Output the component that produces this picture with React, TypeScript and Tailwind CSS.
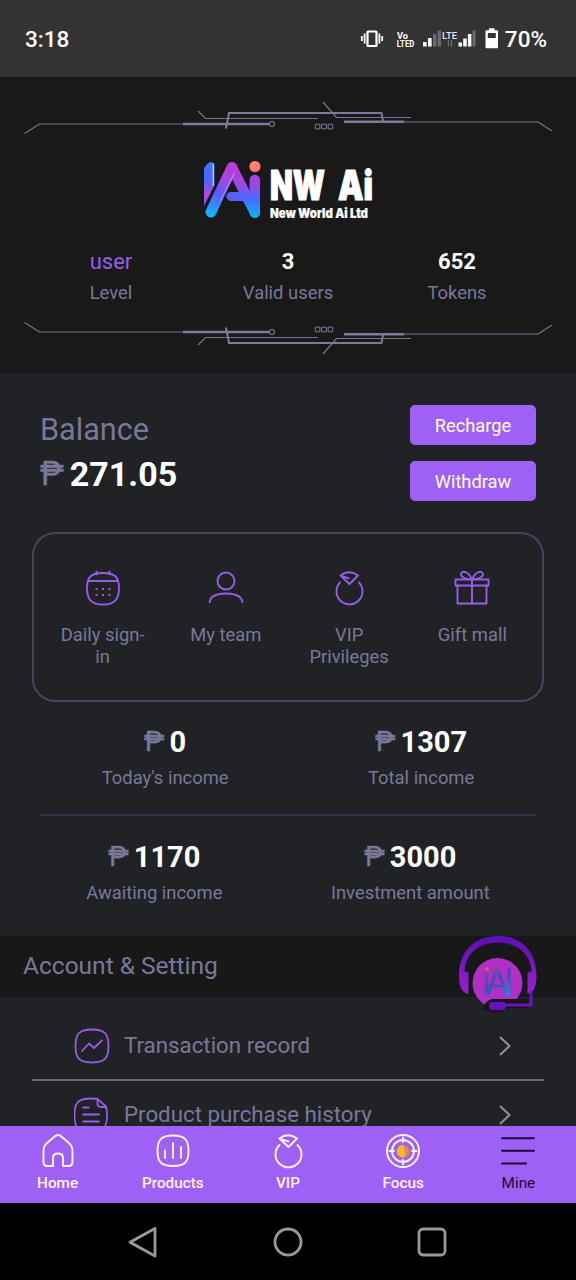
import type { ReactNode } from "react";

/* ─── Status bar ─── */

function StatusBar() {
  return (
    <div className="h-[77px] shrink-0 bg-[#333333] flex items-center justify-between pl-[25px] pr-[29px] text-white text-[22.5px] font-medium">
      <span className="pt-[3px]">3:18</span>
      <div className="flex items-center">
        <svg width="138" height="30" viewBox="360 24 138 30">
          {/* Vibrate */}
          <g fill="none" stroke="#fff" strokeWidth="1.8">
            <rect x="367.5" y="31.5" width="9" height="14.5" rx="0.5" strokeWidth="2.2" />
            <path d="M364.6 33.5v10M361.8 36v5M379.4 33.5v10M382.2 36v5" />
          </g>
          {/* VoLTE */}
          <text x="397" y="38.5" fill="#fff" fontSize="9.5" fontWeight="700" textLength="11" lengthAdjust="spacingAndGlyphs">
            Vo
          </text>
          <text x="396.8" y="46.5" fill="#fff" fontSize="9.5" fontWeight="700" textLength="17.5" lengthAdjust="spacingAndGlyphs">
            LTED
          </text>
          {/* Signal */}
          <path fill="#fff" d="M423 42h3.6v4.5H423zM428 38h3.6v8.5H428z" />
          <path fill="#6b6b6b" d="M433 34h3.4v12.5H433zM437.6 30.5h3.4v16h-3.4z" />
          <text x="442" y="38.5" fill="#e8e8e8" fontSize="9.5" fontWeight="500" textLength="15" lengthAdjust="spacingAndGlyphs">
            LTE
          </text>
          <path d="M448.5 40v6.5M451.5 40v6.5" stroke="#6b6b6b" strokeWidth="1.3" />
          <path fill="#fff" d="M458.5 42.5h3.5v4h-3.5zM463.2 38.5h3.5v8h-3.5zM467.9 34h3.5v12.5h-3.5z" />
          <path fill="#6b6b6b" d="M472.5 30.5h3v16h-3z" />
          {/* Battery */}
          <path
            fill="#fff"
            fillRule="evenodd"
            d="M489 28.3h5.500v2h2.700q1 0 1 1v16q0 1-1 1h-10.700q-1 0-1-1v-16q0-1 1-1h2.500zM487.800 33v5h8V33z"
          />
        </svg>
        <span className="ml-[7px] pt-[3px]">70%</span>
      </div>
    </div>
  );
}

/* ─── Profile header ─── */

function CircuitLine({ className = "" }: { className?: string }) {
  return (
    <svg
      className={`shrink-0 ${className}`}
      width="576"
      height="38"
      viewBox="0 98 576 38"
      fill="none"
      stroke="#77758f"
      strokeWidth="1.2"
    >
      <path d="M24.5 133.5 39.5 124H184M344 122H538L552 131" />
      <path d="M183 124H269" stroke="#7d7b9c" strokeWidth="2.3" />
      <circle cx="272" cy="124" r="2.5" />
      <path d="M198 111 205.5 118.5H318M323 102 336.5 117.5H411" />
      <path d="M226 128.5 229 113H381.5L383 121" stroke="#7d7b9c" strokeWidth="2" />
      <path d="M344 121.7H404" stroke="#7d7b9c" strokeWidth="2.5" />
      <path d="M315.3 124.2h4.6v4.6h-4.600zM321.7 124.2h4.6v4.6h-4.600zM328.1 124.2h4.6v4.6h-4.600z" strokeWidth="1" />
    </svg>
  );
}

function Logo() {
  return (
    <svg className="mt-6 mx-auto shrink-0 overflow-visible" width="172" height="60" viewBox="202 160 172 60">
      <defs>
        <linearGradient id="stem" x1="0" y1="0" x2="0" y2="1">
          <stop offset="0" stopColor="#3b7bff" />
          <stop offset="0.4" stopColor="#4a63ff" />
          <stop offset="0.75" stopColor="#b04be0" />
          <stop offset="1" stopColor="#7b52f0" />
        </linearGradient>
        <linearGradient id="leg" gradientUnits="userSpaceOnUse" x1="232" y1="163" x2="218" y2="218">
          <stop offset="0" stopColor="#c03ad2" />
          <stop offset="0.35" stopColor="#9a4be6" />
          <stop offset="0.6" stopColor="#5a5cff" />
          <stop offset="1" stopColor="#12b6ff" />
        </linearGradient>
        <linearGradient id="post" gradientUnits="userSpaceOnUse" x1="255" y1="168" x2="255" y2="218">
          <stop offset="0" stopColor="#b83cd4" />
          <stop offset="0.35" stopColor="#9a48e4" />
          <stop offset="0.6" stopColor="#4f66ff" />
          <stop offset="1" stopColor="#06b7f5" />
        </linearGradient>
        <linearGradient id="dot" x1="0" y1="0" x2="1" y2="1">
          <stop offset="0" stopColor="#ff9a62" />
          <stop offset="1" stopColor="#f2667c" />
        </linearGradient>
      </defs>
      <path d="M204 206V170q0-4 6-8 4.500 0 4.500 4v19z" fill="url(#stem)" />
      <path d="M213.3 163.5V186" stroke="#b9d3ff" strokeWidth="1.3" />
      <path d="M231 196.5h14" stroke="#5560f5" strokeWidth="9" strokeLinecap="round" />
      <path d="M254.8 180v32.500" stroke="url(#post)" strokeWidth="10.5" strokeLinecap="round" />
      <path d="M232 167.5 254.8 212.5" stroke="url(#post)" strokeWidth="10.5" strokeLinecap="round" />
      <path d="M230 168 208 212" stroke="#191919" strokeWidth="10.5" />
      <path d="M232 167.5 211 212" stroke="url(#leg)" strokeWidth="11" strokeLinecap="round" />
      <path d="M234.5 173 220 201" stroke="#e79bf0" strokeWidth="1" opacity="0.8" />
      <circle cx="255" cy="166.5" r="5.6" fill="url(#dot)" />
      <g fill="#fff" stroke="#fff" strokeLinejoin="round" fontFamily="Inter" fontWeight="900">
        <text x="270" y="199.5" fontSize="41" strokeWidth="1.2" textLength="55" lengthAdjust="spacingAndGlyphs">
          NW
        </text>
        <text x="338" y="199.5" fontSize="41" strokeWidth="1.2" textLength="35" lengthAdjust="spacingAndGlyphs">
          Ai
        </text>
        <text x="270" y="217.5" fontSize="13" strokeWidth="0.2" textLength="98" lengthAdjust="spacingAndGlyphs">
          New World Ai Ltd
        </text>
      </g>
    </svg>
  );
}

function Stat({ value, label, accent }: { value: string; label: string; accent?: boolean }) {
  return (
    <div className="flex flex-col items-center">
      <span className={`text-[22px] leading-[26px] ${accent ? "text-[#9a5fe8]" : "text-white font-bold"}`}>
        {value}
      </span>
      <span className="mt-[6px] text-[18.4px] leading-6">{label}</span>
    </div>
  );
}

function ProfileHeader() {
  return (
    <div className="h-[296px] shrink-0 bg-[#191919] flex flex-col pt-[21px]">
      <CircuitLine />
      <Logo />
      <div className="mt-[29px] ml-6 grid grid-cols-[174px_180px_158px]">
        <Stat value="user" label="Level" accent />
        <Stat value="3" label="Valid users" />
        <Stat value="652" label="Tokens" />
      </div>
      <CircuitLine className="mt-[15px] -scale-y-100" />
    </div>
  );
}

/* ─── Balance ─── */

function ActionButton({ children }: { children: ReactNode }) {
  return (
    <button
      type="button"
      className="w-[126px] h-10 rounded-[5px] bg-[#9f60f5] pt-[1px] text-white text-[18.3px] cursor-pointer"
    >
      {children}
    </button>
  );
}

function Balance() {
  return (
    <div className="pt-8 px-10 flex justify-between">
      <div className="pt-[7px]">
        <div className="text-[30.6px] leading-9">Balance</div>
        <div className="mt-[6px] flex text-[34px] leading-10">
          <span className="text-[32.5px] [-webkit-text-stroke:0.3px]">₱</span>
          <span className="ml-[6px] font-bold text-white">271.05</span>
        </div>
      </div>
      <div className="flex flex-col gap-4">
        <ActionButton>Recharge</ActionButton>
        <ActionButton>Withdraw</ActionButton>
      </div>
    </div>
  );
}

/* ─── Shortcuts ─── */

function CalendarIcon() {
  return (
    <>
      <path d="M18 3C6.500 3 2 6.500 2 18s4.500 16.500 16 16.500S34 29.500 34 18 29.500 3 18 3z" />
      <path d="M2.500 11h31M11.500 .800v4.500M24.500 .800v4.500" />
      <path d="M10.500 19h2M17 19h2M23.500 19h2M10.500 25h2M17 25h2M23.500 25h2" />
    </>
  );
}

function TeamIcon() {
  return (
    <>
      <circle cx="18" cy="11" r="8.5" />
      <path d="M1.500 33C2 26 9 23.500 18 23.500S34 26 34.500 33" />
    </>
  );
}

function RingIcon() {
  return (
    <>
      <path d="M9.500 5.500Q18 -1 27 5.500L18.500 14z" />
      <path d="M10 5.800 18.500 8.500" />
      <path d="M9.500 12a13 13 0 1 0 18 0" />
    </>
  );
}

function GiftIcon() {
  return (
    <>
      <path d="M1.500 9.500h33v6h-33zM3.500 15.500h29v18h-29zM18 9.500v24" />
      <path d="M18 9.500C9 9 5.500 5.500 7.500 3S15 2 18 9.500zM18 9.500C27 9 30.500 5.500 28.500 3S21 2 18 9.500z" />
    </>
  );
}

const SHORTCUTS = [
  { label: "Daily sign-in", icon: <CalendarIcon /> },
  { label: "My team", icon: <TeamIcon /> },
  { label: "VIP Privileges", icon: <RingIcon /> },
  { label: "Gift mall", icon: <GiftIcon /> },
];

function Shortcuts() {
  return (
    <div className="mx-8 mt-[31px] h-[170px] shrink-0 rounded-[23px] border-2 border-[#46455f] pl-[7px] pr-2 pt-9 grid grid-cols-4">
      {SHORTCUTS.map((s) => (
        <div key={s.label} className="flex flex-col items-center">
          <svg width="36" height="36" viewBox="0 0 36 36" fill="none" stroke="#965de6" strokeWidth="1.9" strokeLinejoin="round">
            {s.icon}
          </svg>
          <span className="mt-[18px] w-[90px] text-center text-[18.4px] leading-[22px]">{s.label}</span>
        </div>
      ))}
    </div>
  );
}

/* ─── Income ─── */

function Amount({ value, label }: { value: string; label: string }) {
  return (
    <div className="flex flex-col items-center">
      <div className="flex text-[29px] leading-[34px]">
        <span className="text-[28px] [-webkit-text-stroke:0.3px]">₱</span>
        <span className="ml-[5px] font-bold text-white">{value}</span>
      </div>
      <span className="mt-[7px] text-[18.4px] leading-6">{label}</span>
    </div>
  );
}

function Income() {
  return (
    <div className="h-[234px] shrink-0 pt-[23px]">
      <div className="px-8 flex justify-around">
        <Amount value="0" label="Today's income" />
        <Amount value="1307" label="Total income" />
      </div>
      <div className="mx-10 my-6 h-[2px] bg-[#35344a]" />
      <div className="px-8 flex justify-around">
        <Amount value="1170" label="Awaiting income" />
        <Amount value="3000" label="Investment amount" />
      </div>
    </div>
  );
}

/* ─── Account list ─── */

function SupportBadge() {
  return (
    <svg className="absolute left-[457px] top-0" width="82" height="76" viewBox="0 0 82 76" fill="none">
      <defs>
        <linearGradient id="band" x1="0" y1="0" x2="0" y2="1">
          <stop offset="0" stopColor="#5a0fb4" />
          <stop offset="1" stopColor="#9a1fd0" />
        </linearGradient>
        <linearGradient id="mark" gradientUnits="userSpaceOnUse" x1="30" y1="31" x2="50" y2="60">
          <stop offset="0" stopColor="#8a4a9c" />
          <stop offset="0.5" stopColor="#3b4db8" />
          <stop offset="1" stopColor="#1a8fd6" />
        </linearGradient>
      </defs>
      <path
        d="M2 40C2 14 19 0 41 0s38.500 14 38.500 40c0 10-3 17-9 17.500V36.500l4-1C74 17 59 6.500 41 6.500S8 17 7.500 35.500l4 1V58C5 57 2 50 2 40z"
        fill="url(#band)"
      />
      <circle cx="40.500" cy="47" r="25" fill="#b02fc4" />
      <g stroke="url(#mark)" strokeWidth="3.400" strokeLinecap="round">
        <path d="M29.500 36v20M40 33 31 58M40 33l10 25M52 34l-.500 24" />
      </g>
      <path d="M37 50h8" stroke="#3b4db8" strokeWidth="2.500" />
      <circle cx="30" cy="33" r="2" fill="#d0607c" />
      <path d="M25 73q4-9 10-10h36v9H50q-5 4-13 4z" fill="#17151b" />
      <path d="M74 55V69H48" stroke="#6d12be" strokeWidth="3" />
      <rect x="32" y="66" width="17" height="8" rx="3" fill="#6412bd" />
    </svg>
  );
}

function ListRow({ icon, label }: { icon: ReactNode; label: string }) {
  return (
    <div className="mx-8 h-[69px] shrink-0 border-b-2 border-[#68677f] flex items-center pl-[42px] pr-[32px]">
      <svg width="36" height="36" viewBox="0 0 36 36" fill="none" stroke="#965de6" strokeWidth="1.8" strokeLinejoin="round" strokeLinecap="round">
        {icon}
      </svg>
      <span className="ml-[14px] pt-[1px] text-[22.3px]">{label}</span>
      <svg className="ml-auto" width="14" height="20" viewBox="0 0 14 20" fill="none" stroke="#93939b" strokeWidth="2">
        <path d="M2 1 11.500 10 2 19" />
      </svg>
    </div>
  );
}

function Account() {
  return (
    <div className="relative flex-1 min-h-0 overflow-hidden flex flex-col">
      <div className="h-[61px] shrink-0 bg-[#181818] flex items-center pl-[23px] text-[24.5px]">
        Account &amp; Setting
      </div>
      <div className="h-[15px] shrink-0" />
      <ListRow
        label="Transaction record"
        icon={
          <>
            <path d="M18 1.500C5.500 1.500 1.500 5.500 1.500 18S5.500 34.500 18 34.500 34.500 30.500 34.500 18 30.500 1.500 18 1.500z" />
            <path d="M8 23 15 15.500 20 20 28 12.500" />
          </>
        }
      />
      <ListRow
        label="Product purchase history"
        icon={
          <>
            <path d="M23.500 2Q20 1.500 17 1.500C4 1.500 .500 5.500 .500 18S4 34.500 17 34.500 33 30.500 33 18q0-5-1-8.500z" />
            <path d="M23.500 2v4.500q0 3.500 3.500 3.500h5M9 10.500h6M9 17.500h16M9 24.500h16" />
          </>
        }
      />
      <SupportBadge />
    </div>
  );
}

/* ─── Bottom tabs ─── */

const TABS = [
  {
    label: "Home",
    icon: <path d="M18 2q2 0 4 2l8 7q2.500 2.500 2.500 6v12q0 4-4 4H23V25q0-4.500-5-4.500T13 25v8H7.500q-4 0-4-4V17q0-3.500 2.500-6l8-7q2-2 4-2z" />,
  },
  {
    label: "Products",
    icon: (
      <>
        <path d="M18 2.500C6.500 2.500 2.500 6.500 2.500 18S6.500 33 18 33 33.500 29.500 33.500 18 29.500 2.500 18 2.500z" />
        <path d="M10 17.500V25M18 10v15M26 14v11" />
      </>
    ),
  },
  { label: "VIP", icon: <RingIcon /> },
  {
    label: "Focus",
    icon: (
      <>
        <circle cx="18" cy="18" r="16" />
        <circle cx="18" cy="18" r="11" />
        <path d="M18 4.500V9M18 27v4.500M4.500 18H9M27 18h4.500" />
        <circle cx="18" cy="18.5" r="6.3" fill="#e08a5a" stroke="none" />
        <path d="M18.500 11.500Q12 13 12 18.500t7 6q2-1 1.500-3.500-2-4-2-9.500z" fill="#ffb81f" stroke="none" />
      </>
    ),
  },
  { label: "Mine", icon: <path d="M2 5.200h32M2 17.800h32M2 30.500h24" />, active: true },
];

function TabBar() {
  return (
    <div className="h-[77px] shrink-0 bg-[#9f60f5] grid grid-cols-5">
      {TABS.map((t) => (
        <div
          key={t.label}
          className={`pt-[7px] flex flex-col items-center ${t.active ? "text-[#1c0a3c]" : "text-[#fff4ff]"}`}
        >
          <svg width="36" height="36" viewBox="0 0 36 36" fill="none" stroke="currentColor" strokeWidth="1.9" strokeLinejoin="round" strokeLinecap="round">
            {t.icon}
          </svg>
          <span className={`mt-1 text-[15.3px] leading-5 ${t.active ? "" : "font-medium"}`}>{t.label}</span>
        </div>
      ))}
    </div>
  );
}

function SystemNav() {
  return (
    <div className="h-[77px] shrink-0 bg-black flex items-center justify-center gap-[108px]">
      <svg width="36" height="36" viewBox="0 0 36 36" fill="none" stroke="#999" strokeWidth="2.8" strokeLinejoin="round">
        <path d="M29 4.500v27.500L4 18.200z" />
      </svg>
      <svg width="36" height="36" viewBox="0 0 36 36" fill="none" stroke="#999" strokeWidth="2.8">
        <circle cx="18" cy="18" r="13" />
      </svg>
      <svg width="36" height="36" viewBox="0 0 36 36" fill="none" stroke="#999" strokeWidth="2.8">
        <rect x="5" y="5" width="26" height="26" rx="4" />
      </svg>
    </div>
  );
}

export default function App() {
  return (
    <div className="w-[576px] h-[1280px] overflow-hidden flex flex-col bg-[#202226] text-[#7a7899] font-['Roboto',sans-serif]">
      <StatusBar />
      <ProfileHeader />
      <Balance />
      <Shortcuts />
      <Income />
      <Account />
      <TabBar />
      <SystemNav />
    </div>
  );
}
